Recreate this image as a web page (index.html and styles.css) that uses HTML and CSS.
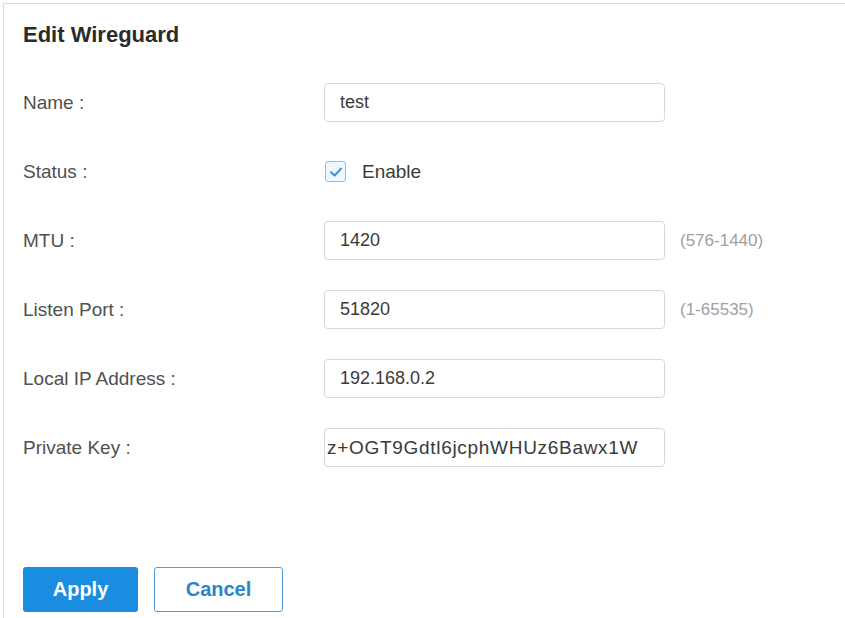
FILE: index.html
```html
<html>
    <head>
        <title>Edit Wireguard</title>
        <link rel="stylesheet" href="styles.css">
    </head>
    <body>
        <div class="panel">
            <div class="title">Edit Wireguard</div>

            <div class="form">
                <div class="row"> <!-- NAME -->
                    <label class="label">Name :</label>
                    <input type="text" class="field" value="test" />
                </div>
                <div class="row"> <!-- STATUS -->
                    <label class="label">Status :</label>
                    <span class="check">
                        <svg width="16" height="16" viewBox="0 0 16 16">
                            <path d="M3 8.3 L6.6 11.6 L13 4.6" fill="none" stroke="#3b8fd2" stroke-width="2" stroke-linecap="round" stroke-linejoin="round"/>
                        </svg>
                    </span>
                    <span class="checkText">Enable</span>
                </div>
                <div class="row"> <!-- MTU -->
                    <label class="label">MTU :</label>
                    <input type="text" class="field" value="1420" />
                    <span class="hint">(576-1440)</span>
                </div>
                <div class="row"> <!-- LISTEN PORT -->
                    <label class="label">Listen Port :</label>
                    <input type="text" class="field" value="51820" />
                    <span class="hint">(1-65535)</span>
                </div>
                <div class="row"> <!-- LOCAL IP -->
                    <label class="label">Local IP Address :</label>
                    <input type="text" class="field" value="192.168.0.2" />
                </div>
                <div class="row"> <!-- PRIVATE KEY -->
                    <label class="label">Private Key :</label>
                    <input type="text" class="field keyField" value="z+OGT9Gdtl6jcphWHUz6Bawx1W" />
                </div>
            </div>

            <div class="buttons">
                <button class="applyButton">Apply</button>
                <button class="cancelButton">Cancel</button>
            </div>
        </div>
    </body>
</html>
```

FILE: styles.css
```css
body{
    margin: 0;
    background: white;
    font-family: "Liberation Sans", Arial, sans-serif;
    color: #3a3a3a;
    overflow: hidden;
}

.panel{
    margin: 3px 0 0 3px;
    border-top: 1px solid #dcdcdc;
    border-left: 1px solid #dcdcdc;
    padding: 18px 0 0 19px;
    height: 596px;
}

.title{
    font-size: 22px;
    font-weight: bold;
    line-height: 26px;
    color: #2b2b2b;
}

.form{
    margin-top: 35px;
    display: flex;
    flex-direction: column;
    gap: 30px;
}

.row{
    display: flex;
    align-items: center;
    height: 39px;
}

.label{
    width: 301px;
    font-size: 19px;
    color: #505050;
}

.field{
    box-sizing: border-box;
    width: 341px;
    height: 39px;
    border: 1px solid #d8d8d8;
    border-radius: 4px;
    padding: 0 15px;
    font-family: "Liberation Sans", Arial, sans-serif;
    font-size: 18px;
    color: #3a3a3a;
    outline: none;
}

.keyField{
    padding-left: 2px;
    padding-right: 2px;
    font-size: 19px;
    letter-spacing: 0.7px;
}

.hint{
    margin-left: 15px;
    font-size: 17px;
    color: #a0a0a0;
}

.check{
    box-sizing: border-box;
    width: 21px;
    height: 21px;
    margin-left: 1px;
    border: 1px solid #8fc2e6;
    border-radius: 3px;
    background: #eef7fd;
    display: flex;
    align-items: center;
    justify-content: center;
}

.checkText{
    margin-left: 16px;
    font-size: 19px;
    color: #3a3a3a;
}

.buttons{
    margin-top: 100px;
    display: flex;
    gap: 16px;
}

.applyButton{
    width: 115px;
    height: 45px;
    border: 0px;
    border-radius: 3px;
    background: #1a8de0;
    color: white;
    font-family: "Liberation Sans", Arial, sans-serif;
    font-size: 20px;
    font-weight: bold;
}

.cancelButton{
    width: 129px;
    height: 45px;
    border: 1px solid #4a9ee0;
    border-radius: 3px;
    background: white;
    color: #2a86c9;
    font-family: "Liberation Sans", Arial, sans-serif;
    font-size: 20px;
    font-weight: bold;
}
```
